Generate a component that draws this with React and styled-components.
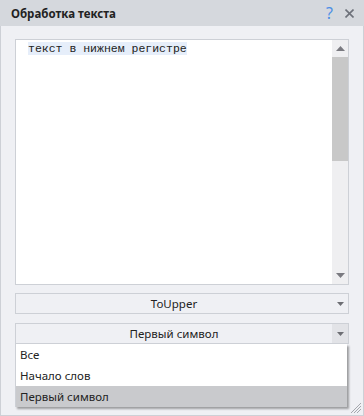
import styled, { createGlobalStyle } from "styled-components";

const Global = createGlobalStyle`
  html, body { margin: 0; padding: 0; background: #eff0f4; }
  body { font-family: "Noto Sans", "Open Sans", sans-serif; }
`

const Window = styled.div`
  width: 364px;
  height: 416px;
  box-sizing: border-box;
  border: 1px solid #cdd0d6;
  border-top: none;
  background: #eff0f4;
  display: flex;
  flex-direction: column;
  position: relative;
`

const TitleBar = styled.div`
  height: 26px;
  background: #d5d8dd;
  display: flex;
  align-items: center;
  padding: 0 10px 0 11px;
  margin: 0 -1px;
`

const Title = styled.div`
  flex: 1;
  font-size: 11.5px;
  font-weight: bold;
  color: #222;
`

const HelpBtn = styled.span`
  color: #4d8fe6;
  font-size: 16px;
  margin-right: 12px;
  line-height: 1;
`

const Body = styled.div`
  padding: 13px 14px 0 14px;
  display: flex;
  flex-direction: column;
`

const Editor = styled.div`
  height: 244px;
  border: 1px solid #cdd0d6;
  background: #fff;
  display: flex;
`

const EditorText = styled.div`
  flex: 1;
  padding: 2px 12px;
  font-family: "Liberation Mono", monospace;
  font-size: 11.5px;
  color: #222;
  span { background: #e6eefa; }
`

const ScrollBar = styled.div`
  width: 16px;
  background: #efeff1;
  display: flex;
  flex-direction: column;
`

const ArrowBox = styled.div`
  height: 17px;
  display: flex;
  align-items: center;
  justify-content: center;
`

const Thumb = styled.div`
  height: 104px;
  background: #c8c8c8;
`

const Track = styled.div`
  flex: 1;
`

const Combo = styled.div`
  margin-top: ${p => p.$mt}px;
  height: 19px;
  border: 1px solid #cdd0d6;
  background: #eff0f4;
  display: flex;
  align-items: stretch;
  font-size: 11.5px;
  color: #222;
`

const ComboText = styled.div`
  flex: 1;
  display: flex;
  align-items: center;
  justify-content: center;
`

const ComboBtn = styled.div`
  width: 16px;
  display: flex;
  align-items: center;
  justify-content: center;
  background: ${p => p.$active ? "#e2e3e7" : "transparent"};
`

const List = styled.div`
  background: #fff;
  border-left: 1px solid #cdd0d6;
  box-shadow: 2px 2px 2px rgba(0,0,0,0.35);
  margin-right: 2px;
`

const Item = styled.div`
  height: 21px;
  display: flex;
  align-items: center;
  padding-left: 4px;
  font-size: 11.5px;
  color: #222;
  background: ${p => p.$selected ? "#c9cacd" : "#fff"};
`

const Grip = styled.svg`
  position: absolute;
  right: 1px;
  bottom: 1px;
`

const Tri = ({ up, color = "#7a7a80" }) => (
  <svg width="9" height="5" viewBox="0 0 9 5">
    {up
      ? <polygon points="0,5 9,5 4.5,0" fill={color} />
      : <polygon points="0,0 9,0 4.5,5" fill={color} />}
  </svg>
)

const SmallTri = () => (
  <svg width="7" height="4" viewBox="0 0 7 4">
    <polygon points="0,0 7,0 3.5,4" fill="#6d6e74" />
  </svg>
)

export default function App() {
  return (
    <Window>
      <Global />
      <TitleBar>
        <Title>Обработка текста</Title>
        <HelpBtn>?</HelpBtn>
        <svg width="9" height="9" viewBox="0 0 9 9">
          <path d="M0.5 0.5 L8.5 8.5 M8.5 0.5 L0.5 8.5" stroke="#6d717a" strokeWidth="1.6" />
        </svg>
      </TitleBar>
      <Body>
        <Editor>
          <EditorText><span>текст в нижнем регистре</span></EditorText>
          <ScrollBar>
            <ArrowBox><Tri up /></ArrowBox>
            <Thumb />
            <Track />
            <ArrowBox><Tri /></ArrowBox>
          </ScrollBar>
        </Editor>
        <Combo $mt={8}>
          <ComboText>ToUpper</ComboText>
          <ComboBtn><SmallTri /></ComboBtn>
        </Combo>
        <Combo $mt={9}>
          <ComboText>Первый символ</ComboText>
          <ComboBtn $active><SmallTri /></ComboBtn>
        </Combo>
        <List>
          <Item>Все</Item>
          <Item>Начало слов</Item>
          <Item $selected>Первый символ</Item>
        </List>
      </Body>
      <Grip width="12" height="12" viewBox="0 0 12 12">
        <path d="M11 1 L1 11 M11 4 L4 11 M11 7 L7 11" stroke="#a4a7ad" strokeWidth="1" />
      </Grip>
    </Window>
  );
}
